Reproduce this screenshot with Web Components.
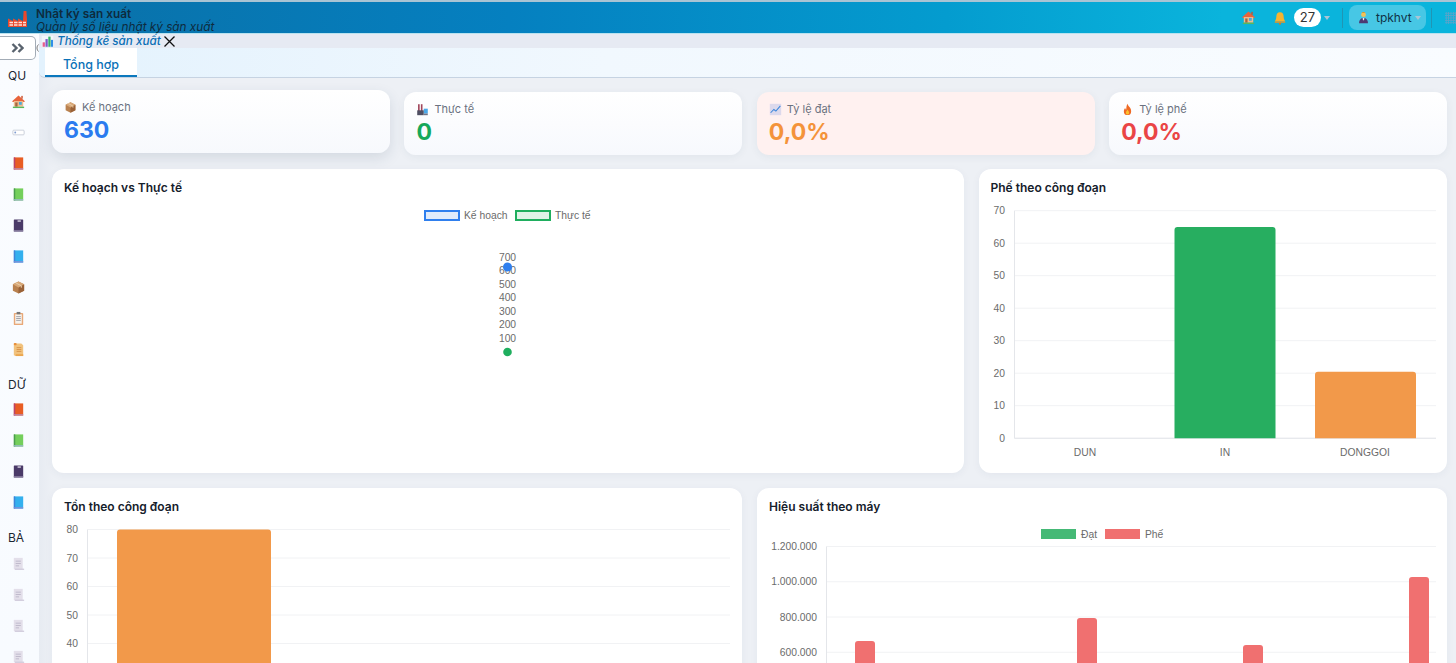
<!DOCTYPE html>
<html lang="vi">
<head>
<meta charset="utf-8">
<title>Thống kê sản xuất</title>
<style>
html,body{margin:0;padding:0;height:663px;overflow:hidden;background:#edf0f5;font-family:Inter,"Noto Sans",sans-serif}
</style>
</head>
<body>
<app-shell>
  <app-header slot="header"></app-header>
  <app-sidebar slot="sidebar"></app-sidebar>
  <main-tabs slot="tabs"></main-tabs>
  <dash-board slot="content"></dash-board>
</app-shell>
<script>
const ICONS={
home:'<path d="M1.500 7.500 8 1.500l6.500 6v1h-13z" fill="#e8643c"/><rect x="11" y="2" width="1.500" height="3" fill="#c9502c"/><rect x="3" y="7.500" width="10" height="6" fill="#eebc8f"/><rect x="8.500" y="8.500" width="3" height="3" fill="#4aa8d8"/><rect x="4.500" y="9" width="2.500" height="4.500" fill="#a5673f"/><rect x="2" y="13.500" width="12" height="1.500" fill="#58b85c"/>',
ticket:'<rect x="2" y="5.500" width="12" height="5" rx="1" fill="#fff" stroke="#c3c8d4" stroke-width=".9"/><circle cx="4.500" cy="8" r="1" fill="#7d9bd0"/>',
bookred:'<rect x="3" y="1.500" width="10" height="13" fill="#e85d24"/><rect x="3" y="1.500" width="1.500" height="13" fill="#b9436d"/><rect x="3" y="13" width="10" height="1.500" fill="#b98ab0"/>',
bookgreen:'<rect x="3" y="1.500" width="10" height="13" fill="#74cf5c"/><rect x="3" y="1.500" width="1.500" height="13" fill="#4a9c50"/><rect x="3" y="13" width="10" height="1.500" fill="#9ab8c8"/>',
bookdark:'<rect x="3" y="1.500" width="10" height="13" rx=".6" fill="#4a3a68"/><rect x="7" y="2.500" width="3.500" height="1.500" fill="#d8d2e2"/><rect x="3" y="13" width="10" height="1.500" fill="#8e84a4"/>',
bookblue:'<rect x="3" y="1.500" width="10" height="13" fill="#33b0ee"/><rect x="3" y="1.500" width="1.500" height="13" fill="#3f83d8"/><rect x="3" y="13" width="10" height="1.500" fill="#7f8fd8"/>',
box:'<path d="M8 1.500 14 4.500v7L8 14.500 2 11.500v-7z" fill="#b9814f"/><path d="M8 8 14 4.500v7L8 14.500z" fill="#9a6238"/><path d="M8 1.500 14 4.500 8 8 2 4.500z" fill="#d8a878"/><path d="M5 3 11 6.200v2" stroke="#ecd2ae" stroke-width="1" fill="none"/>',
clip:'<rect x="3" y="2" width="10" height="13" rx="1" fill="#e8a878"/><rect x="4.500" y="3.500" width="7" height="10" fill="#f6f3ee"/><rect x="6" y="1" width="4" height="2.500" fill="#777"/><path d="M5.500 6h5M5.500 8h5M5.500 10h5" stroke="#8b8b95" stroke-width=".8"/>',
scroll:'<path d="M3 1.500h8l2 2V15H5l-2-1z" fill="#f1c27d"/><rect x="3" y="1" width="3" height="2.500" rx="1" fill="#e88f3c"/><path d="M6 6h5M6 8h5M6 10h5" stroke="#d8924a" stroke-width="1"/><rect x="5" y="13" width="8" height="2" fill="#eba64e"/>',
doc:'<rect x="3" y="2" width="9.500" height="12" fill="#e3dfea"/><path d="M5 5.500h5.500M5 8h5.500M5 10.500h3.500" stroke="#b9b3c6" stroke-width=".9"/><rect x="4" y="13.500" width="10" height="1.300" fill="#cfc9da"/>',
chart:'<rect x="1" y="1" width="14" height="14" fill="#f4f6fb"/><rect x="2" y="9" width="2.800" height="5.500" fill="#e85d8c"/><rect x="5.500" y="5" width="2.800" height="9.500" fill="#7a5cc8"/><rect x="9" y="2" width="2.800" height="12.500" fill="#35b56a"/><rect x="12.300" y="6" width="2.500" height="8.500" fill="#2f8fe8"/>',
trend:'<rect x="1" y="1" width="14" height="14" fill="#dcd9ec"/><path d="M2 12 6 8l2.500 2L14 3.500" stroke="#3a86dc" stroke-width="1.300" fill="none"/>',
fire:'<path d="M8 1c.5 3 4.500 4.600 4.500 9A4.500 4.800 0 0 1 3.500 10C3.500 8 4.500 6.800 5.200 6c.2 1.300.8 1.800 1.300 2C6.500 5.500 6.800 3 8 1z" fill="#ef6a24"/><path d="M8 8c.4 1.500 2 2.200 2 4a2 2.300 0 0 1-4 0c0-1.700 1.600-2.400 2-4z" fill="#fbc02d"/>',
factory:'<rect x="2.500" y="1.500" width="2" height="10" fill="#a1465c"/><rect x="6" y="1.500" width="2" height="10" fill="#a1465c"/><rect x="9.500" y="7" width="5" height="6" fill="#4aa8e8"/><rect x="1.500" y="9" width="8" height="6" fill="#4e4e62"/><rect x="9.500" y="13" width="5" height="2" fill="#6f7284"/>',
bell:'<path d="M8 1.500c3 0 4.200 2.400 4.200 5 0 3 1.300 4.500 1.800 5.500H2c.5-1 1.800-2.500 1.800-5.500 0-2.600 1.200-5 4.200-5z" fill="#f6b430"/><rect x="2" y="12" width="12" height="1.500" rx=".7" fill="#ea9425"/><circle cx="8" cy="14.500" r="1.200" fill="#d9781f"/>',
person:'<circle cx="8" cy="4.500" r="3" fill="#f1c15a"/><path d="M6 2.500c.5-1.500 3.500-1.500 4 0z" fill="#d9962c"/><path d="M2.500 15c0-4 2-6.500 5.500-6.500s5.500 2.500 5.500 6.500z" fill="#4d3a73"/><path d="M7 8.500h2l-.3 3h-1.400z" fill="#eee"/>',
logo:'<path d="M0 17V8.500l5 2.500V8.500l5 2.500V8.500l5 2.500.6-10h2.800l.6 8V17z" fill="#e8482c"/><path d="M1.500 11.800h3.500v1.500H1.500zm4.500 0h3.500v1.500H6zm4.500 0H14v1.500h-3.500zm4.500 0h3v1.500h-3zM1.500 14.300h3.500v1.500H1.500zm4.500 0h3.500v1.500H6zm4.500 0H14v1.500h-3.500zm4.500 0h3v1.500h-3z" fill="#fde3da"/>'
};
function icon(name,size=14,vb='0 0 16 16'){return `<svg width="${size}" height="${size}" viewBox="${vb}" aria-hidden="true" style="display:block;flex:none">${ICONS[name]}</svg>`}

function def(tag,html,setup){
  customElements.define(tag,class extends HTMLElement{
    connectedCallback(){
      if(this.shadowRoot)return;
      const r=this.attachShadow({mode:'open'});
      r.innerHTML=typeof html==='function'?html(this):html;
      if(setup)setup(r,this);
    }
  });
}

def('app-shell',`<style>
:host{display:grid;grid-template-columns:39px 1fr;grid-template-rows:34px 44px 1fr;height:663px;overflow:hidden;background:#edf0f5}
.h{grid-column:1/3;grid-row:1;display:block;position:relative;z-index:3}
.s{grid-column:1;grid-row:2/4;display:block;min-height:0}
.t{grid-column:2;grid-row:2;display:block}
.c{grid-column:2;grid-row:3;display:block;min-height:0;overflow:hidden}
</style>
<div class="h"><slot name="header"></slot></div>
<div class="s"><slot name="sidebar"></slot></div>
<div class="t"><slot name="tabs"></slot></div>
<div class="c"><slot name="content"></slot></div>`);

def('app-header',`<style>
:host{display:flex;align-items:stretch;height:34px;box-sizing:border-box;border-top:2px solid #a9c4d4;border-bottom:1px solid #b9e2ef;
background:linear-gradient(90deg,#0a6fa6 0%,#0580c0 35%,#049ccf 65%,#0ab4dc 84%,#0ab4dc 100%);color:#0d2a3a;font-family:Inter,sans-serif}
.logo{margin:8px 0 0 8px;flex:none}
.titles{margin-left:8px;padding-top:6px;line-height:13px;white-space:nowrap}
.t1{font-size:11.800px;font-weight:600;color:#0e2b3d}
.t2{font-size:11.800px;font-style:italic;color:#0e2b3d;letter-spacing:-.02px}
.right{margin-left:auto;display:flex;align-items:center;height:100%}
.pill{background:#fff;border-radius:10px;height:19px;width:27px;margin-left:7px;font-size:13px;line-height:19px;text-align:center;color:#333}
.caret{width:0;height:0;border:3.500px solid transparent;border-top:4px solid #a9c6d6;border-bottom:0;margin-left:3px}
.div{width:1px;height:20px;background:rgba(60,110,130,.45)}
.user{display:flex;align-items:center;height:25px;width:77px;box-sizing:border-box;background:rgba(255,255,255,.25);border-radius:8px;padding-left:8px;margin-left:6px;font-size:12px;color:#103245}
.user span{margin-left:6px}
.grid{width:11px;height:12px;margin-left:13px;background-image:radial-gradient(#5ba3c9 .8px,transparent 1px);background-size:2.400px 2.400px}
</style>
<div class="logo">${icon('logo',20,'0 0 20 20')}</div>
<div class="titles"><div class="t1">Nhật ký sản xuất</div><div class="t2">Quản lý số liệu nhật ký sản xuất</div></div>
<div class="right">
  <div>${icon('home',15)}</div>
  <div style="margin-left:17px">${icon('bell',14)}</div>
  <div class="pill">27</div><div class="caret"></div>
  <div class="div" style="margin-left:12px"></div>
  <div class="user">${icon('person',13)}<span>tpkhvt</span><div class="caret"></div></div>
  <div class="div" style="margin-left:5px"></div>
  <div class="grid"></div>
</div>`);

const nav=[['QU',['home','ticket','bookred','bookgreen','bookdark','bookblue','box','clip','scroll']],
 ['DỮ',['bookred','bookgreen','bookdark','bookblue']],
 ['BẢ',['doc','doc','doc','doc']]];
def('app-sidebar',`<style>
:host{display:block;height:100%;overflow:hidden;background:linear-gradient(180deg,#fafcff,#f8fbff);font-family:Inter,sans-serif}
.top{display:flex;align-items:center;margin-top:2px;height:24px}
.toggle{width:36px;height:24px;flex:none;box-sizing:border-box;background:#fff;border:1px solid #a3acb6;border-left:0;border-radius:0 5px 5px 0;display:flex;align-items:center;justify-content:center}
.cut{flex:none}
.sec{display:flex;flex-direction:column;padding-top:9px}
.sec+.sec{padding-top:5px}
.lbl{font-size:12px;line-height:14px;color:#1b2733;padding-left:8px;height:14px;margin-bottom:10.500px}
.it{height:31px;display:flex;align-items:flex-start;padding-left:10.500px}
</style>
<div class="top"><div class="toggle"><svg width="13" height="10" viewBox="0 0 13 10"><path d="M1.500 1 5.500 5 1.500 9M7.500 1l4 4-4 4" stroke="#59636e" stroke-width="2.400" fill="none"/></svg></div>
<svg class="cut" width="3" height="8" viewBox="0 0 3 8"><path d="M2.500 .5C.5 2.500.5 5.500 2.500 7.500" stroke="#777" fill="none"/></svg></div>
${nav.map(([l,items])=>`<div class="sec"><div class="lbl">${l}</div>${items.map(n=>`<div class="it">${icon(n,15)}</div>`).join('')}</div>`).join('')}`);

def('main-tabs',`<style>
:host{display:block;height:44px;background:#e6eaf3;font-family:Inter,sans-serif}
.crumb{height:14px;display:flex;align-items:center;font-size:11.700px;font-style:italic;font-weight:500;color:#0b6fb6;padding-left:2px;white-space:nowrap;position:relative;z-index:4}
.crumb span{margin-left:3px}
.crumb svg.x{margin-left:2px}
.bar{height:30px;box-sizing:border-box;background:linear-gradient(90deg,#e3f2fd,#f1f8fe 40%,#f9fcff);border-bottom:1px solid #c6d3e2;border-radius:0 0 0 6px;padding-left:6px;display:flex}
.tab{width:92px;height:29px;box-sizing:border-box;background:#fff;border-bottom:2px solid #0b78bd;color:#0b72b8;font-size:12.500px;font-weight:500;text-align:center;line-height:33px}
</style>
<div class="crumb">${icon('chart',13)}<span>Thống kê sản xuất</span><svg class="x" width="13" height="13" viewBox="0 0 13 13"><path d="M1.500 1.500l10 10M11.500 1.500l-10 10" stroke="#111" stroke-width="1.300"/></svg></div>
<div class="bar"><div class="tab">Tổng hợp</div></div>`);

def('stat-card',h=>`<style>
:host{display:block;height:63px;box-sizing:border-box;border-radius:12px;padding:11px 12px;background:linear-gradient(180deg,#fff,#f7f9fd);box-shadow:0 2px 8px rgba(40,60,90,.06);font-family:Inter,sans-serif}
:host([tone=warn]){background:#fff1f0}
:host([lifted]){transform:translateY(-2px);box-shadow:0 5px 14px rgba(40,60,90,.13)}
.l{display:flex;align-items:center;font-size:11px;line-height:13px;color:#6b7280}
.l span{margin-left:5px}
.v{font-size:23px;font-weight:650;line-height:28px;margin-top:2px;color:${h.getAttribute('color')}}
</style>
<div class="l">${icon(h.getAttribute('icon'),13)}<span>${h.getAttribute('label')}</span></div>
<div class="v">${h.getAttribute('value')}</div>`);

def('chart-card',`<style>
:host{display:block;height:304px;box-sizing:border-box;border-radius:12px;background:#fff;box-shadow:0 2px 8px rgba(40,60,90,.05);font-family:Inter,sans-serif;overflow:hidden}
.t{font-size:12px;font-weight:600;line-height:15px;color:#15202b;padding:11px 12px 0;height:32px;box-sizing:border-box}
</style><div class="t"><slot name="title"></slot></div><slot></slot>`);

/* Chart: the viewBox uses page coordinates, so it can be read against the reference. */
def('chart-plot',h=>{
  const c=JSON.parse(h.getAttribute('config'));
  const [x,y,w,ht]=c.box;
  let s='';
  const T=(tx,ty,t,a='middle')=>`<text x="${tx}" y="${ty}" text-anchor="${a}" dominant-baseline="central">${t}</text>`;
  (c.grid||[]).forEach(g=>{
    s+=`<line x1="${c.ax}" x2="${c.rx}" y1="${g[0]}" y2="${g[0]}" stroke="#f1f2f4"/>`;
    s+=T(c.lx,g[0],g[1],'end');
  });
  if(c.ax)s+=`<line x1="${c.ax}" x2="${c.ax}" y1="${c.top}" y2="${c.base||y+ht}" stroke="#e4e6ea"/>`;
  if(c.base)s+=`<line x1="${c.ax}" x2="${c.rx}" y1="${c.base}" y2="${c.base}" stroke="#e4e6ea"/>`;
  (c.bars||[]).forEach(b=>{
    const bb=(c.base||y+ht+20);
    s+=`<path d="M${b[0]} ${bb}V${b[2]+3}q0-3 3-3H${b[1]-3}q3 0 3 3V${bb}z" fill="${b[3]}"/>`;
  });
  (c.xl||[]).forEach(l=>s+=T(l[0],l[1],l[2]));
  (c.legend||[]).forEach(l=>{
    s+=`<rect x="${l[0]+(l[5]?1:0)}" y="${l[1]+(l[5]?1:0)}" width="${l[5]?34:35}" height="${l[5]?9:10}" fill="${l[4]}" ${l[5]?`stroke="${l[5]}" stroke-width="2"`:''}/>`;
    s+=T(l[0]+40,l[1]+5,l[3],'start');
  });
  (c.ticks||[]).forEach(t=>s+=T(t[0],t[1],t[2]));
  (c.dots||[]).forEach(d=>s+=`<circle cx="${d[0]}" cy="${d[1]}" r="${d[2]}" fill="${d[3]}"/>`);
  return `<style>:host{display:block}svg{display:block;width:100%;height:${ht}px;font:10.300px "Liberation Sans",Arial,sans-serif;fill:#6b6b6b}</style>
  <svg viewBox="${x} ${y} ${w} ${ht}" preserveAspectRatio="none">${s}</svg>`;
});

const g1=[70,60,50,40,30,20,10,0].map((v,i)=>[210.7+i*32.5,String(v)]);
const g2=[80,70,60,50,40].map((v,i)=>[529.5+i*28.5,String(v)]);
const g3=['1.200.000','1.000.000','800.000','600.000'].map((v,i)=>[546.5+i*35.25,v]);
const cfg={
 a:{box:[52,201,912,272],
    legend:[[424,210,0,'Kế hoạch','#e0ebfb','#2f7fee'],[515,210,0,'Thực tế','#dff3e7','#1fae5e']],
    ticks:[[507.5,257,'700'],[507.5,270.500,'600'],[507.5,284,'500'],[507.5,297.500,'400'],[507.5,311,'300'],[507.5,324.500,'200'],[507.5,338,'100']],
    dots:[[507.5,267,4.500,'#2f7fee'],[507.5,352,4.300,'#1fae5e']]},
 b:{box:[979,201,468.5,272],grid:g1,ax:1014.5,rx:1436,lx:1005,top:210.7,base:438.3,
    bars:[[1174.5,1275.5,227,'#27ae60'],[1315,1416,371.7,'#f2994a']],
    xl:[[1085,452,'DUN'],[1225,452,'IN'],[1365,452,'DONGGOI']]},
 c:{box:[52,520,690,143],grid:g2,ax:87.5,rx:730,lx:78,top:529.5,bars:[[117,271,529.5,'#f2994a']]},
 d:{box:[757,520,690,143],grid:g3,ax:826.5,rx:1436,lx:817,top:546.5,
    legend:[[1041,529,0,'Đạt','#45b976'],[1105,529,0,'Phế','#f07070']],
    bars:[[855,875,641,'#f07070'],[1077,1097,618,'#f07070'],[1243,1263,645,'#f07070'],[1409,1429,577,'#f07070']]}
};
const esc=o=>JSON.stringify(o).replace(/'/g,'&#39;');
def('dash-board',`<style>
:host{display:block;padding:14px 9px 0 13px;box-sizing:border-box;background:linear-gradient(90deg,#e7ebf2 0,#edf0f5 14px)}
.row{display:grid;gap:14.600px;margin-bottom:14px}
.r1{grid-template-columns:repeat(4,1fr)}
.r2{grid-template-columns:1fr 468.500px;gap:14.500px;margin-bottom:15px}
.r3{grid-template-columns:1fr 1fr;gap:15px}
</style>
<div class="row r1">
 <stat-card lifted icon="box" label="Kế hoạch" value="630" color="#2b7bef"></stat-card>
 <stat-card icon="factory" label="Thực tế" value="0" color="#16a85a"></stat-card>
 <stat-card tone="warn" icon="trend" label="Tỷ lệ đạt" value="0,0%" color="#f4933a"></stat-card>
 <stat-card icon="fire" label="Tỷ lệ phế" value="0,0%" color="#ea4545"></stat-card>
</div>
<div class="row r2">
 <chart-card><span slot="title">Kế hoạch vs Thực tế</span><chart-plot config='${esc(cfg.a)}'></chart-plot></chart-card>
 <chart-card><span slot="title">Phế theo công đoạn</span><chart-plot config='${esc(cfg.b)}'></chart-plot></chart-card>
</div>
<div class="row r3">
 <chart-card><span slot="title">Tồn theo công đoạn</span><chart-plot config='${esc(cfg.c)}'></chart-plot></chart-card>
 <chart-card><span slot="title">Hiệu suất theo máy</span><chart-plot config='${esc(cfg.d)}'></chart-plot></chart-card>
</div>`);
</script>
</body>
</html>
